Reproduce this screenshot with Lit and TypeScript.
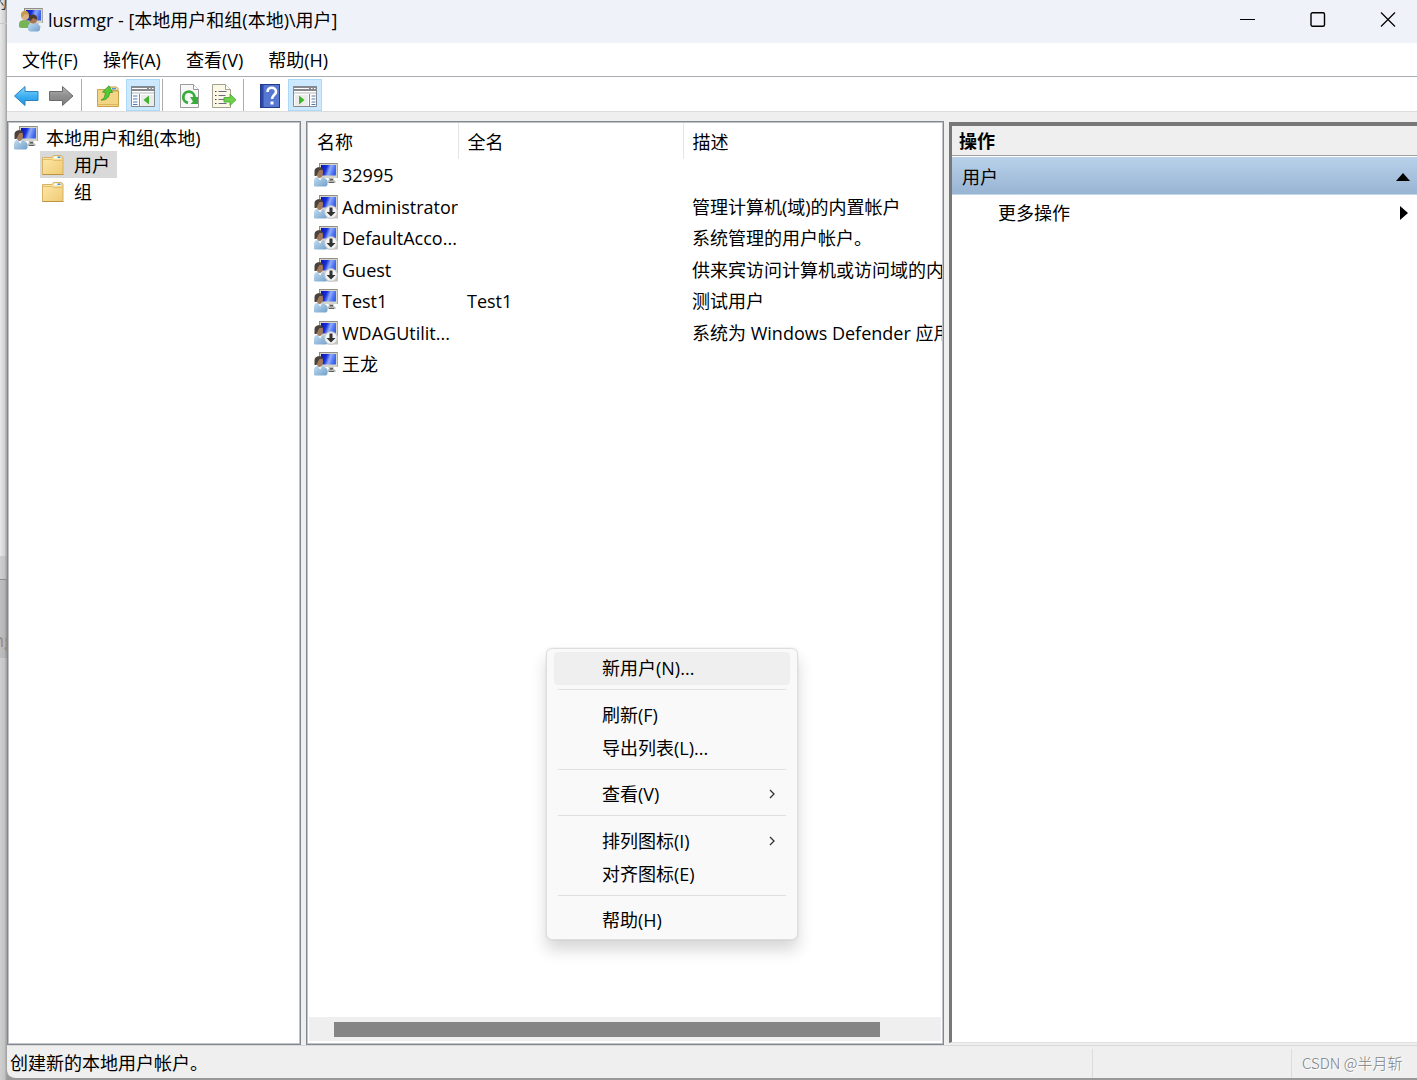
import { LitElement, html, css, svg, nothing } from "lit";
import { customElement } from "lit/decorators.js";

const monitor = svg`
  <path d="M5 0h19v15H5z" fill="#d6d5cb"/>
  <path d="M5 0h19v1H5zM5 0h1v7H5z" fill="#8f8f88"/>
  <path d="M23 0h1v15h-1z" fill="#a9a9a4"/>
  <path d="M7 2h15v10.500H7z" fill="url(#scr)"/>
  <path d="M14.500 15h5v2l2 1v2h-8v-2l1.500-1z" fill="#b9bab6"/>
  <path d="M16 16h3v1.500h-3zM15 19h5v1h-5z" fill="#5d5f60"/>`;

const defs = svg`
  <defs>
    <linearGradient id="scr" x1="0" x2="1" y1="0" y2=".25">
      <stop offset="0" stop-color="#0a12a8"/><stop offset=".4" stop-color="#1730dc"/>
      <stop offset=".65" stop-color="#8fabf8"/><stop offset="1" stop-color="#3a62ee"/>
    </linearGradient>
    <linearGradient id="body" x1="0" x2="1" y1="0" y2="1">
      <stop offset="0" stop-color="#c5def2"/><stop offset="1" stop-color="#6f9fcb"/>
    </linearGradient>
  </defs>`;

const person = svg`
  <path d="M0 23v-5c0-3 2-4.500 5-4.500s8 1.500 8.500 5V22L12 23.500H1z" fill="url(#body)"/>
  <path d="M4.500 14H8l-1.500 3.500-1.500-1z" fill="#eef4f9"/>
  <path d="M1.500 7C2 5 3.500 4.500 5.500 4.500S9 6.500 9 9.500 7.500 15 5.500 15 1.500 11 1.500 7z" fill="#a57a58"/>
  <path d="M.500 13V8C.500 5.500 3 4 5.500 4.200 8 4.400 9 5.500 9 7L5.500 7 4 9.500 2.500 13z" fill="#4b423b"/>`;

const computerUser = (disabled = false) => html`
  <svg class="icon" viewBox="0 0 24 24" aria-hidden="true">
    ${defs}${monitor}${person}
    ${disabled
      ? svg`<path d="M13 15h11v8.500H13z" fill="#c4c4bd"/>
        <circle cx="17" cy="17" r="6.300" fill="#f4f4f4" stroke="#c4c4c4"/>
        <path d="M15.500 12.500h3v4.500H21.500L17 21.500 12.500 17h3z" fill="#333"/>`
      : nothing}
  </svg>`;

const groupIcon = html`
  <svg class="icon" viewBox="0 0 24 24" aria-hidden="true">
    ${defs}${monitor}
    <path d="M0 19v-3c0-2.500 2-4 5-4s6 1.500 6 4v4H2z" fill="#77b457"/>
    <circle cx="6" cy="8" r="4" fill="#dbb184"/>
    <path d="M2 8c-.500-4 2-5.500 4.500-5.300C9 3 10 5 9.500 7L6 6 3.500 9z" fill="#c79b45"/>
    <path d="M9 22v-3c0-2.500 2-4 5.500-4s6.500 2 6.500 5v2l-2 1.500h-8z" fill="url(#body)"/>
    <circle cx="14" cy="11.500" r="4" fill="#a8764f"/>
    <path d="M10 12c-.500-4 1.500-5.500 4-5.500s4.500 2 4 5L14 10l-2.500 3z" fill="#4a3a2f"/>
  </svg>`;

const folder = html`
  <svg class="folder" viewBox="0 0 22 20" aria-hidden="true">
    <defs><linearGradient id="fold" x1="0" x2="1" y1="0" y2="1">
      <stop offset="0" stop-color="#ffe9aa"/><stop offset="1" stop-color="#efca74"/>
    </linearGradient></defs>
    <path d="M.500 2.500h9.500l1.500-2h8l1.500 1.500v17.500H.500z" fill="url(#fold)" stroke="#d6b262"/>
    <path d="M12 1.500h7v2h-7z" fill="#fff"/><path d="M15.500 1.500h3v1.500h-3z" fill="#3c97d8"/>
    <path d="M1 4.500h9l1.500 1H20.500" fill="none" stroke="#e2bf6c"/>
    <path d="M.500 19.500h21" stroke="#bd9440"/>
  </svg>`;

const backIcon = html`
  <svg class="tool-icon" viewBox="0 0 26 22" aria-hidden="true">
    <defs><linearGradient id="back" x2="0" y2="1">
      <stop offset="0" stop-color="#8bd8fb"/><stop offset=".5" stop-color="#3fb0f2"/>
      <stop offset="1" stop-color="#1c93e0"/>
    </linearGradient></defs>
    <path d="M.500 11 11 1.500V6.500H24v9H11v5z" fill="url(#back)" stroke="#2b82bd" stroke-linejoin="round"/>
  </svg>`;

const forwardIcon = html`
  <svg class="tool-icon" viewBox="0 0 26 22" aria-hidden="true">
    <defs><linearGradient id="fwd" x2="0" y2="1">
      <stop offset="0" stop-color="#b3b3b3"/><stop offset=".5" stop-color="#8f8f8f"/>
      <stop offset="1" stop-color="#808080"/>
    </linearGradient></defs>
    <path d="M24 11 13.500 1.500V6.500H.500v9h13v5z" fill="url(#fwd)" stroke="#6c6c6c" stroke-linejoin="round"/>
  </svg>`;

const upFolder = html`
  <svg class="tool-icon" viewBox="0 0 26 22" aria-hidden="true">
    <path d="M13 5V3.500L14.500 2h7L23 3.500V6z" fill="#f3deb0" stroke="#c49d49"/>
    <path d="M17 3h4v1.500h-4z" fill="#4a9bd6"/>
    <path d="M2.500 4.500H12L13.500 6H23.500v15.500h-21z" fill="#f3d586" stroke="#c9a24b"/>
    <path d="M2.500 19.500h21" stroke="#ddb55c"/>
    <path d="M6 15c3.500-1 4-4 4.300-7.500L7.500 7 14 .800 17.500 7.500 14.500 7.500C14.500 12 11.500 15.500 6 15z" fill="#55c83a" stroke="#2f9a22" stroke-width=".8"/>
  </svg>`;

const paneIcon = (right: boolean) => html`
  <svg class="tool-icon" viewBox="0 0 26 22" aria-hidden="true">
    <path d="M1.500 1.500h23v20h-23z" fill="#fff" stroke="#85898e"/>
    <path d="M1 1h24v5H1z" fill="#85898e"/>
    <path d="M2 3h15v1H2zM19 3h1.500v1H19zM22 3h1.500v1H22z" fill="#fff"/>
    <path d="M2 7h22v2H2z" fill="#d8dadc"/>
    ${right
      ? svg`<path d="M17.500 9v12" stroke="#85898e"/>
        <path d="M19.500 11h4M19.500 14h4M19.500 17h4M19.500 19.500h4" stroke="#4a7fb5"/>
        <path d="M3 10h13v11H3z" fill="#ececec"/>
        <path d="M7 10.500 12.500 15 7 19.500z" fill="#3db52c"/>`
      : svg`<path d="M9.500 9v12" stroke="#85898e"/>
        <path d="M3 11h4.500M3 14h4.500M3 17h4.500M3 19.500h4.500" stroke="#4a7fb5"/>
        <path d="M11 10h13v11H11z" fill="#ececec"/>
        <path d="M19 10.500 13.500 15l5.500 4.500z" fill="#3db52c"/>`}
  </svg>`;

const refreshIcon = html`
  <svg class="tool-icon tall" viewBox="0 0 26 24" aria-hidden="true">
    <path d="M4.500.500h13l5 5v18h-18z" fill="#f8f8f8" stroke="#9b9b9b"/>
    <path d="M17.500.500v5h5" fill="#fff" stroke="#9b9b9b"/>
    <path d="M12 18.800a5.600 5.600 0 1 1 6.500-5.300" fill="none" stroke="#38ad3c" stroke-width="2.800"/>
    <path d="M14 13h8v7h-7.500l2.500-2.500z" fill="#38ad3c"/>
  </svg>`;

const exportIcon = html`
  <svg class="tool-icon tall" viewBox="0 0 26 24" aria-hidden="true">
    <path d="M1.500.500h13l5 5v18h-18z" fill="#fbf8e6" stroke="#a3a08f"/>
    <path d="M14.500.500v5h5" fill="#fff" stroke="#a3a08f"/>
    <path d="M7.500 7.500h8M7.500 11.500h7M7.500 15.500h7M7.500 19.500h8" stroke="#6d6b83"/>
    <path d="M4 7.500h1.500M4 11.500h1.500M4 15.500h1.500M4 19.500h1.500" stroke="#444"/>
    <path d="M13 13.500h6V10l6 5.800-6 5.700v-3.500h-6z" fill="#6fd24c" stroke="#43a52c" stroke-width=".8"/>
  </svg>`;

const helpIcon = html`
  <svg class="tool-icon tall" viewBox="0 0 26 24" aria-hidden="true">
    <path d="M3 0h20v24H3z" fill="#2b47a5"/>
    <path d="M6.500 1H22v22H6.500z" fill="#5577d2"/>
    <path d="M3.500.500h19v23h-19z" fill="none" stroke="#223a8e"/>
    <path d="M10.500 8c0-3 2-4.200 4.200-4.200S19 5.200 19 7.700c0 3.300-4 3.500-4 7.300" fill="none" stroke="#fff" stroke-width="2.600"/>
    <path d="M13.500 17.500h3v3h-3z" fill="#fff"/>
  </svg>`;

interface Account {
  name: string;
  fullName?: string;
  description?: string;
  disabled?: boolean;
}

const accounts: Account[] = [
  { name: "32995" },
  { name: "Administrator", description: "管理计算机(域)的内置帐户", disabled: true },
  { name: "DefaultAcco...", description: "系统管理的用户帐户。", disabled: true },
  { name: "Guest", description: "供来宾访问计算机或访问域的内", disabled: true },
  { name: "Test1", fullName: "Test1", description: "测试用户" },
  { name: "WDAGUtilit...", description: "系统为 Windows Defender 应用", disabled: true },
  { name: "王龙" },
];

const contextGroups: { label: string; submenu?: boolean; active?: boolean }[][] = [
  [{ label: "新用户(N)...", active: true }],
  [{ label: "刷新(F)" }, { label: "导出列表(L)..." }],
  [{ label: "查看(V)", submenu: true }],
  [{ label: "排列图标(I)", submenu: true }, { label: "对齐图标(E)" }],
  [{ label: "帮助(H)" }],
];

@customElement("app-root")
export class AppRoot extends LitElement {
  static styles = css`
    :host {
      display: flex;
      min-height: 100vh;
      box-sizing: border-box;
      background: #999;
      color: #000;
      font: 18px/24px "Open Sans", "Noto Sans CJK SC", sans-serif;
    }
    * { box-sizing: border-box; }
    button {
      font: inherit;
      color: inherit;
      background: none;
      border: 0;
      margin: 0;
      padding: 0;
      text-align: left;
      white-space: nowrap;
    }
    ul { list-style: none; margin: 0; padding: 0; }
    .backdrop {
      flex: none;
      width: 7px;
      overflow: hidden;
      display: flex;
      flex-direction: column;
      background: linear-gradient(90deg, #cfcfcf, #c2c2c2 5px, #a3a3a3 6px);
      white-space: nowrap;
    }
    .backdrop .strip { background: linear-gradient(90deg, #e8e8e8, #cfcfcf 5px, #a9a9a9 6px); }
    .backdrop .top {
      flex: 0 0 24px;
      display: flex;
      justify-content: flex-end;
      border-bottom: 1px solid #c8c8c8;
      font-size: 14px;
      line-height: 6px;
      color: #333;
    }
    .backdrop .middle { flex: 0 0 532px; }
    .backdrop .tab { flex: 0 0 24px; border-bottom: 1px solid #8d8d8d; }
    .backdrop .field {
      flex: 0 0 78px;
      display: flex;
      align-items: flex-end;
      justify-content: center;
      padding-bottom: 6px;
      background: rgba(0, 0, 0, 0.07);
      color: #958a8a;
    }
    .window {
      flex: 1;
      min-width: 0;
      display: flex;
      flex-direction: column;
      background: #efefef;
      border-bottom: 2px solid #999;
      border-bottom-left-radius: 9px;
      overflow: hidden;
    }
    .titlebar {
      display: flex;
      align-items: center;
      height: 43px;
      padding: 0 4px 4px 12px;
      background: #f0f2f9;
    }
    .title { flex: 1; margin: 0 0 0 5px; font-size: 18px; font-weight: 400; white-space: nowrap; }
    .controls { display: flex; gap: 20px; }
    .control { width: 50px; height: 32px; display: grid; place-items: center; }
    .control svg { width: 16px; height: 16px; display: block; }
    .icon { width: 24px; height: 24px; display: block; flex: none; }
    .menubar {
      display: flex;
      height: 34px;
      padding-left: 3px;
      background: #fff;
      border-bottom: 1px solid #a9adb2;
    }
    .menubar button { padding: 0 13px 0 12px; }
    .toolbar {
      display: flex;
      gap: 1px;
      padding: 2px 3px 0;
      background: #fff;
      border-bottom: 1px solid #dcdcdc;
      height: 35px;
    }
    .tool {
      width: 34px;
      height: 32px;
      padding-top: 2px;
      display: grid;
      place-items: center;
      border: 1px solid transparent;
    }
    .tool.on { background: #cce8ff; border-color: #add8f8; }
    .tool-icon { width: 26px; height: 22px; display: block; }
    .tool-icon.tall { height: 24px; }
    .divider { width: 1px; margin: 0 8px 0 1px; background: #adadad; }
    .panes {
      flex: 1;
      min-height: 0;
      display: grid;
      grid-template-columns: 294fr 638fr 468fr;
      gap: 5px;
      padding-top: 9px;
    }
    .pane {
      position: relative;
      min-width: 0;
      background: #fff;
      border: 1px solid #828790;
      box-shadow: inset 0 0 0 1px #c0c4c9;
      display: flex;
      flex-direction: column;
    }
    .tree { padding: 2px 6px; }
    .node { display: flex; align-items: center; height: 27px; gap: 8px; }
    .leaves { padding-left: 26px; }
    .leaves .node { gap: 10px; padding: 0 7px 0 2px; }
    .node.selected { background: #d9d9d9; }
    .folder { width: 22px; height: 20px; display: block; }
    .scroller { flex: 1; overflow: hidden; margin: 1px; }
    table { width: 100%; table-layout: fixed; border-collapse: collapse; }
    .name-col { width: 150px; }
    .full-col { width: 225px; }
    th {
      height: 36px;
      padding: 2px 9px 0;
      text-align: left;
      font-weight: 400;
      border-right: 1px solid #e5e5e5;
    }
    th:last-child { border-right: 0; }
    td { height: 32px; padding: 0 0 0 9px; white-space: nowrap; overflow: hidden; }
    tr:nth-child(even) td { height: 31px; }
    td:first-child { padding-left: 6px; }
    .account { display: flex; align-items: center; gap: 4px; }
    .hscroll { height: 24px; margin: 0 2px 3px; padding: 5px 61px 4px 25px; background: #efefef; }
    .thumb { height: 100%; background: #858585; }
    .context {
      position: absolute;
      left: 239px;
      top: 526px;
      width: 252px;
      padding: 3px 7px 2px;
      background: #f9f9f9;
      border: 1px solid #dedede;
      border-radius: 6px;
      box-shadow: 0 10px 16px rgba(0, 0, 0, 0.16), 0 0 0 1px rgba(0, 0, 0, 0.03);
    }
    .section + .section { border-top: 1px solid #e0e0e0; margin: 4px 4px 0; padding-top: 9px; }
    .section:nth-child(odd):not(:first-child) { padding-top: 8px; }
    .entry {
      display: flex;
      align-items: center;
      width: 100%;
      height: 33px;
      padding: 0 10px 2px 44px;
      border-radius: 4px;
    }
    .entry.active { background: #efefef; padding-left: 48px; }
    .entry svg { margin-left: auto; width: 8px; height: 10px; }
    .actions {
      border: 0;
      border-left: 3px solid #777;
      border-top: 4px solid #777;
      border-bottom: 1px solid #e0e0e0;
      margin: 1px 0 2px;
      box-shadow: none;
    }
    .actions h2 {
      margin: 0;
      padding: 3px 7px;
      height: 30px;
      font: inherit;
      font-weight: 700;
      background: #efefef;
      border-bottom: 1px solid #a0a0a0;
    }
    .bar, .more { display: flex; align-items: center; justify-content: space-between; }
    .bar {
      height: 38px;
      margin-top: 1px;
      padding: 2px 7px 0 10px;
      background: linear-gradient(#b9d1ea, #98b4d3);
      border-bottom: 1px solid #c4d6e9;
    }
    .more { height: 35px; padding: 0 9px 0 46px; }
    .status {
      display: flex;
      align-items: stretch;
      height: 33px;
      border-top: 1px solid #d9d9d9;
      line-height: 34px;
    }
    .message { flex: 1; padding-left: 3px; }
    .cell { border-left: 1px solid #dcdcdc; margin-top: 3px; width: 199px; }
    .mark {
      width: 126px;
      padding-left: 10px;
      color: #808080;
      font: 15px/28px "Noto Sans CJK SC", sans-serif;
      text-shadow: 1px 1px #fff;
      font-weight: 300;
      white-space: nowrap;
    }
  `;

  render() {
    return html`
      <div class="backdrop" aria-hidden="true">
        <div class="strip top">的</div>
        <div class="strip middle"></div>
        <div class="tab"></div>
        <div class="field">ng</div>
      </div>
      <main class="window">
        <header class="titlebar">
          ${groupIcon}
          <h1 class="title">lusrmgr - [本地用户和组(本地)\\用户]</h1>
          <div class="controls">
            <button class="control" aria-label="最小化">
              <svg viewBox="0 0 16 16"><path d="M0 7.500h15" stroke="#000"/></svg>
            </button>
            <button class="control" aria-label="最大化">
              <svg viewBox="0 0 16 16"><rect x="1" y=".7" width="13.500" height="13.500" rx="1.500" fill="none" stroke="#000" stroke-width="1.400"/></svg>
            </button>
            <button class="control" aria-label="关闭">
              <svg viewBox="0 0 16 16"><path d="m1 .500 14 14M15 .500l-14 14" stroke="#000" stroke-width="1.200"/></svg>
            </button>
          </div>
        </header>
        <nav class="menubar">
          ${["文件(F)", "操作(A)", "查看(V)", "帮助(H)"].map((m) => html`<button>${m}</button>`)}
        </nav>
        <div class="toolbar" role="toolbar">
          <button class="tool" aria-label="后退">${backIcon}</button>
          <button class="tool" aria-label="前进">${forwardIcon}</button>
          <span class="divider"></span>
          <button class="tool" aria-label="向上">${upFolder}</button>
          <button class="tool on" aria-label="显示控制台树">${paneIcon(false)}</button>
          <span class="divider"></span>
          <button class="tool" aria-label="刷新">${refreshIcon}</button>
          <button class="tool" aria-label="导出列表">${exportIcon}</button>
          <span class="divider"></span>
          <button class="tool" aria-label="帮助">${helpIcon}</button>
          <button class="tool on" aria-label="显示操作窗格">${paneIcon(true)}</button>
        </div>
        <div class="panes">
          <section class="pane tree">
            <ul>
              <li>
                <button class="node">${computerUser()}<span>本地用户和组(本地)</span></button>
                <ul class="leaves">
                  <li><button class="node selected">${folder}<span>用户</span></button></li>
                  <li><button class="node">${folder}<span>组</span></button></li>
                </ul>
              </li>
            </ul>
          </section>
          <section class="pane">
            <div class="scroller">
              <table>
                <colgroup><col class="name-col"><col class="full-col"><col></colgroup>
                <thead><tr><th>名称</th><th>全名</th><th>描述</th></tr></thead>
                <tbody>
                  ${accounts.map((a) => html`
                    <tr>
                      <td><div class="account">${computerUser(a.disabled)}<span>${a.name}</span></div></td>
                      <td>${a.fullName}</td>
                      <td>${a.description}</td>
                    </tr>`)}
                </tbody>
              </table>
            </div>
            <div class="hscroll"><div class="thumb"></div></div>
            <div class="context" role="menu">
              ${contextGroups.map((g) => html`
                <div class="section">
                  ${g.map((e) => html`
                    <button role="menuitem" class="entry ${e.active ? "active" : ""}">
                      ${e.label}
                      ${e.submenu
                        ? html`<svg viewBox="0 0 8 10"><path d="m2 1 4 4-4 4" fill="none" stroke="#333" stroke-width="1.300"/></svg>`
                        : nothing}
                    </button>`)}
                </div>`)}
            </div>
          </section>
          <section class="pane actions">
            <h2>操作</h2>
            <button class="bar">用户
              <svg width="14" height="8" viewBox="0 0 14 8"><path d="M0 8 7 0l7 8z"/></svg>
            </button>
            <button class="more">更多操作
              <svg width="8" height="14" viewBox="0 0 8 14"><path d="M0 0v14l8-7z"/></svg>
            </button>
          </section>
        </div>
        <footer class="status">
          <span class="message">创建新的本地用户帐户。</span>
          <span class="cell"></span>
          <span class="cell mark">CSDN @半月斩</span>
        </footer>
      </main>
    `;
  }
}
